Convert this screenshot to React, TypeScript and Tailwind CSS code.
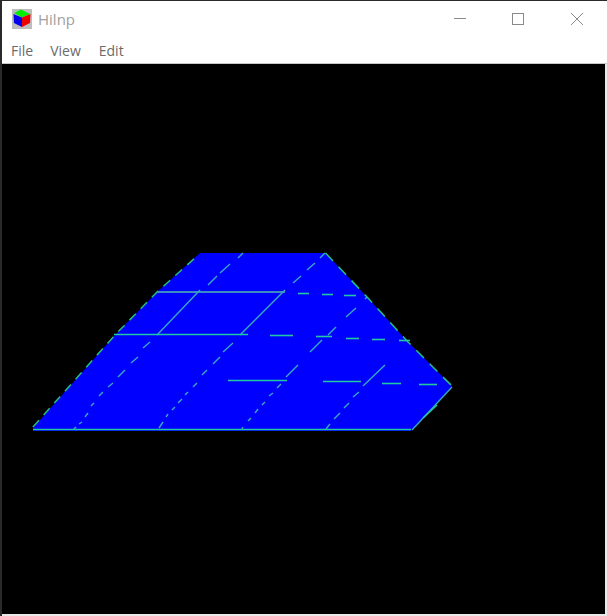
type Seg = [number, number, number, number];

// page coordinates; the canvas sits at (2,64)
const green: Seg[] = [
  [33, 429.5, 411, 429.5],
  [114, 334.5, 248, 334.5],
  [228, 380.5, 287, 380.5],
  [298, 293.5, 309, 293.5],
  [322, 294.5, 333, 294.5],
  [344, 295.5, 356, 295.5],
  [270, 335.5, 293, 335.5],
  [316, 336.5, 332, 336.5],
  [346, 338.5, 359, 338.5],
  [372, 339.5, 385, 339.5],
  [399, 340.5, 410, 340.5],
  [323, 381.5, 361, 381.5],
  [382, 383.5, 401, 383.5],
  [419, 384.5, 437, 384.5],
  [437, 405, 423, 418],
];

const teal: Seg[] = [
  [200, 290, 157, 335],
  [285, 290, 240, 335],
  [385, 365, 363, 386],
  [452, 387, 412, 430],
  // first diagonal
  [243, 253, 238, 258],
  [230, 264, 220, 273],
  [217, 276, 208, 285],
  [150, 342, 143, 348],
  [138, 357, 131, 363],
  [125, 370, 118, 377],
  [113, 383, 108, 387],
  [103, 392, 99, 396],
  [94, 403, 91, 406],
  [88, 413, 85, 417],
  [82, 422, 79, 424],
  [76, 427, 74, 429],
  // second diagonal
  [325, 253, 320, 258],
  [315, 263, 307, 270],
  [301, 276, 293, 283],
  [233, 343, 223, 352],
  [220, 357, 213, 364],
  [207, 370, 202, 375],
  [197, 383, 193, 387],
  [188, 392, 185, 395],
  [182, 399, 178, 403],
  [175, 407, 172, 410],
  [168, 414, 166, 417],
  [163, 422, 159, 428],
  // third diagonal
  [367, 297, 365, 299],
  [356, 308, 346, 317],
  [336, 327, 328, 335],
  [322, 340, 310, 352],
  [298, 365, 286, 377],
  [281, 384, 277, 388],
  [273, 393, 269, 396],
  [265, 402, 262, 405],
  [258, 409, 255, 413],
  [251, 418, 248, 421],
  [243, 427, 242, 429],
  // fourth diagonal
  [359, 392, 353, 397],
  [349, 403, 344, 408],
  [340, 413, 334, 419],
  [330, 424, 326, 429],
];

function Lines({ segs, color, width }: { segs: Seg[]; color: string; width: number }) {
  return (
    <g stroke={color} strokeWidth={width} fill="none">
      {segs.map((s, i) => (
        <line key={i} x1={s[0]} y1={s[1]} x2={s[2]} y2={s[3]} />
      ))}
    </g>
  );
}

function Plane() {
  return (
    <svg viewBox="2 64 603 550" className="block h-full w-full">
      <polygon points="200,253 325.5,253 368,298 408,342 452,386 411,431 33,431 33,428 115,335 157,292" fill="#0000ff" />
      <polyline points="33,427 115,335 157,292 196,257" fill="none" stroke="#22c080" strokeWidth="1.5" strokeDasharray="9 7" />
      <polyline points="325.5,253 368,298 408,342 452,386" fill="none" stroke="#22c080" strokeWidth="1.5" strokeDasharray="11 8" />
      <line x1="157" y1="292" x2="285" y2="292" stroke="#3a8cc4" strokeWidth="2" />
      <Lines segs={teal} color="#35a8c4" width={1.4} />
      <Lines segs={green} color="#22c8a0" width={1.6} />
    </svg>
  );
}

function CubeIcon() {
  return (
    <svg viewBox="0 0 20 20" className="h-5 w-5 shrink-0">
      <rect width="20" height="20" fill="#bdbdbd" />
      <polygon points="2,4 9,0.5 18,5 10,8.5" fill="#00ee00" />
      <polygon points="1.5,5 10,8.5 10,18 2,14" fill="#0000ee" />
      <polygon points="10,8.5 18.5,5 18,14 10,18" fill="#ee0000" />
    </svg>
  );
}

export default function App() {
  return (
    <div className="flex h-[616px] w-[607px] flex-col overflow-hidden bg-[#2a2a2a] pt-[1px] pl-[2px] font-['Open_Sans',sans-serif]">
      <div className="flex h-[36px] shrink-0 items-center bg-white pr-[24px] pl-[10px]">
        <CubeIcon />
        <span className="ml-[6px] flex-1 text-[15px] text-[#a0a0a0]">Hilnp</span>
        <svg viewBox="0 0 12 12" className="h-3 w-3 shrink-0 text-[#8a8a8a]">
          <path d="M0 5.5H12" stroke="currentColor" fill="none" />
        </svg>
        <svg viewBox="0 0 12 12" className="ml-[46px] h-3 w-3 shrink-0 text-[#8a8a8a]">
          <rect x="0.5" y="0.5" width="11" height="11" stroke="currentColor" fill="none" />
        </svg>
        <svg viewBox="0 0 12 12" className="ml-[47px] h-3 w-3 shrink-0 text-[#8a8a8a]">
          <path d="M0 0L12 12M12 0L0 12" stroke="currentColor" fill="none" />
        </svg>
      </div>
      <div className="flex h-[27px] shrink-0 items-center gap-[17px] border-b border-[#c8c8c8] bg-white pl-[9px] text-[14px] text-[#6a6a6a]">
        <span>File</span>
        <span>View</span>
        <span className="ml-[1px]">Edit</span>
      </div>
      <div className="min-h-0 flex-1 border-r-2 border-b-2 border-[#e8e8e8] bg-black">
        <Plane />
      </div>
    </div>
  );
}
